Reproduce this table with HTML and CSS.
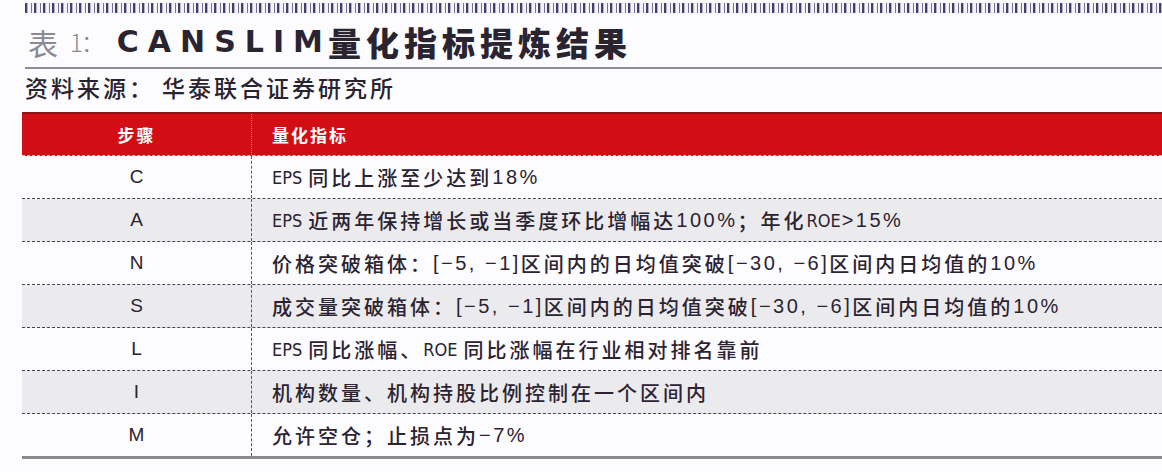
FILE: index.html
```html
<!DOCTYPE html>
<html lang="zh-CN">
<head>
<meta charset="utf-8">
<title>CANSLIM量化指标提炼结果</title>
<link rel="stylesheet" href="styles.css">
</head>
<body>
<div class="page">
  <div class="strip"></div>
  <h1 class="title"><span class="lbl">表</span><span class="num">1：</span><span class="latin">CANSLIM</span><span class="cjk">量化指标提炼结果</span></h1>
  <div class="rule"></div>
  <p class="source"><span class="src-label">资料来源：</span>华泰联合证券研究所</p>
  <div class="table">
    <div class="row head"><div class="c1">步骤</div><div class="c2">量化指标</div></div>
    <div class="row"><div class="c1">C</div><div class="c2"><span class="cond">EPS</span>同比上涨至少达到<span class="en">18%</span></div></div>
    <div class="row alt"><div class="c1">A</div><div class="c2"><span class="cond">EPS</span>近两年保持增长或当季度环比增幅达<span class="en">100%</span>；年化<span class="cond tight">ROE</span><span class="en">&gt;15%</span></div></div>
    <div class="row"><div class="c1">N</div><div class="c2">价格突破箱体：<span class="en">[−5, −1]</span>区间内的日均值突破<span class="en">[−30, −6]</span>区间内日均值的<span class="en">10%</span></div></div>
    <div class="row alt"><div class="c1">S</div><div class="c2">成交量突破箱体：<span class="en">[−5, −1]</span>区间内的日均值突破<span class="en">[−30, −6]</span>区间内日均值的<span class="en">10%</span></div></div>
    <div class="row"><div class="c1">L</div><div class="c2"><span class="cond">EPS</span>同比涨幅、<span class="cond">ROE</span>同比涨幅在行业相对排名靠前</div></div>
    <div class="row alt"><div class="c1">I</div><div class="c2">机构数量、机构持股比例控制在一个区间内</div></div>
    <div class="row last"><div class="c1">M</div><div class="c2">允许空仓；止损点为<span class="en">−7%</span></div></div>
  </div>
</div>
</body>
</html>
```

FILE: styles.css
```css
* { box-sizing: border-box; }
html, body { margin: 0; padding: 0; background: #fcfcfe; }
body {
  width: 1162px;
  height: 472px;
  overflow: hidden;
  font-family: "Liberation Sans", "Noto Sans CJK SC", sans-serif;
  color: #2b2331;
}
.page {
  padding: 3px 0 0 25px;
}
.strip {
  height: 10px;
  background: repeating-linear-gradient(90deg, #4a3a72 0 2px, #b9b3cc 2px 3px, #f4f3f8 3px 6px, #7a6f98 6px 7px, #f4f3f8 7px 9px);
}
.title {
  margin: 9px 0 0 3px;
  height: 40px;
  display: flex;
  align-items: center;
  font-size: 30px;
  line-height: 40px;
  font-weight: 700;
  white-space: nowrap;
}
.lbl {
  font-family: "Noto Sans CJK SC", sans-serif;
  font-weight: 400;
  color: #8b8a92;
}
.num {
  font-family: "Noto Sans CJK SC", sans-serif;
  font-weight: 300;
  color: #8b8a92;
  font-size: 24px;
  margin-left: 12px;
  margin-right: 14px;
  letter-spacing: -2px;
}
.latin {
  font-family: "DejaVu Sans", sans-serif;
  font-weight: 700;
  letter-spacing: 9px;
  margin-right: -4px;
  color: #2a2330;
}
.cjk {
  font-family: "Noto Sans CJK SC", sans-serif;
  font-weight: 900;
  font-size: 33px;
  letter-spacing: 5px;
  color: #2a2330;
}
.rule {
  margin-top: 5px;
  height: 2px;
  background: #8e8d94;
}
.source {
  margin: 3px 0 0 0;
  height: 30px;
  line-height: 30px;
  font-family: "Noto Sans CJK SC", sans-serif;
  font-size: 23px;
  font-weight: 500;
  letter-spacing: 3px;
  color: #2a2330;
  white-space: nowrap;
}
.src-label { margin-right: 7px; }
.table {
  margin-top: 10px;
  margin-left: -3px;
  width: 1140px;
}
.row {
  display: flex;
  height: 43px;
  border-bottom: 1px dashed #4a4450;
  font-size: 20px;
  white-space: nowrap;
}
.row.alt { background: #ebebee; }
.row.last { height: 45px; border-bottom: 3px solid #8a8990; }
.c1 {
  width: 230px;
  display: flex;
  align-items: center;
  justify-content: center;
  border-right: 1px dashed #5a5460;
  font-family: "Liberation Sans", sans-serif;
  font-size: 19px;
  color: #2b2331;
}
.c2 {
  flex: 1;
  display: flex;
  align-items: center;
  padding-left: 20px;
  font-family: "Noto Sans CJK SC", sans-serif;
  font-weight: 500;
  font-size: 20px;
  letter-spacing: 3px;
  color: #2b2331;
  white-space: pre;
}
.en {
  font-family: "Liberation Sans", sans-serif;
  font-weight: 400;
  font-size: 20px;
  letter-spacing: 2.5px;
}
.cond {
  font-family: "DejaVu Sans Condensed", "Liberation Sans Narrow", "Liberation Sans", sans-serif;
  font-weight: 400;
  font-size: 18px;
  letter-spacing: 0;
  margin-right: 6px;
}
.cond.tight { margin-right: 1px; }
.row.head {
  height: 44px;
  background: #d20d14;
  border-top: 2px solid #8e1418;
  border-bottom: 1px dashed #f2c4c6;
  color: #ffffff;
  font-weight: 700;
  font-size: 17px;
}
.row.head .c1 {
  border-right: 1px dotted #f08a8e;
  font-family: "Noto Sans CJK SC", sans-serif;
  font-weight: 700;
  color: #ffffff;
  font-size: 17px;
  letter-spacing: 2px;
}
.row.head .c2 {
  color: #ffffff;
  font-family: "Noto Sans CJK SC", sans-serif;
  font-weight: 700;
  font-size: 17px;
  letter-spacing: 2px;
  padding-left: 20px;
}
```
